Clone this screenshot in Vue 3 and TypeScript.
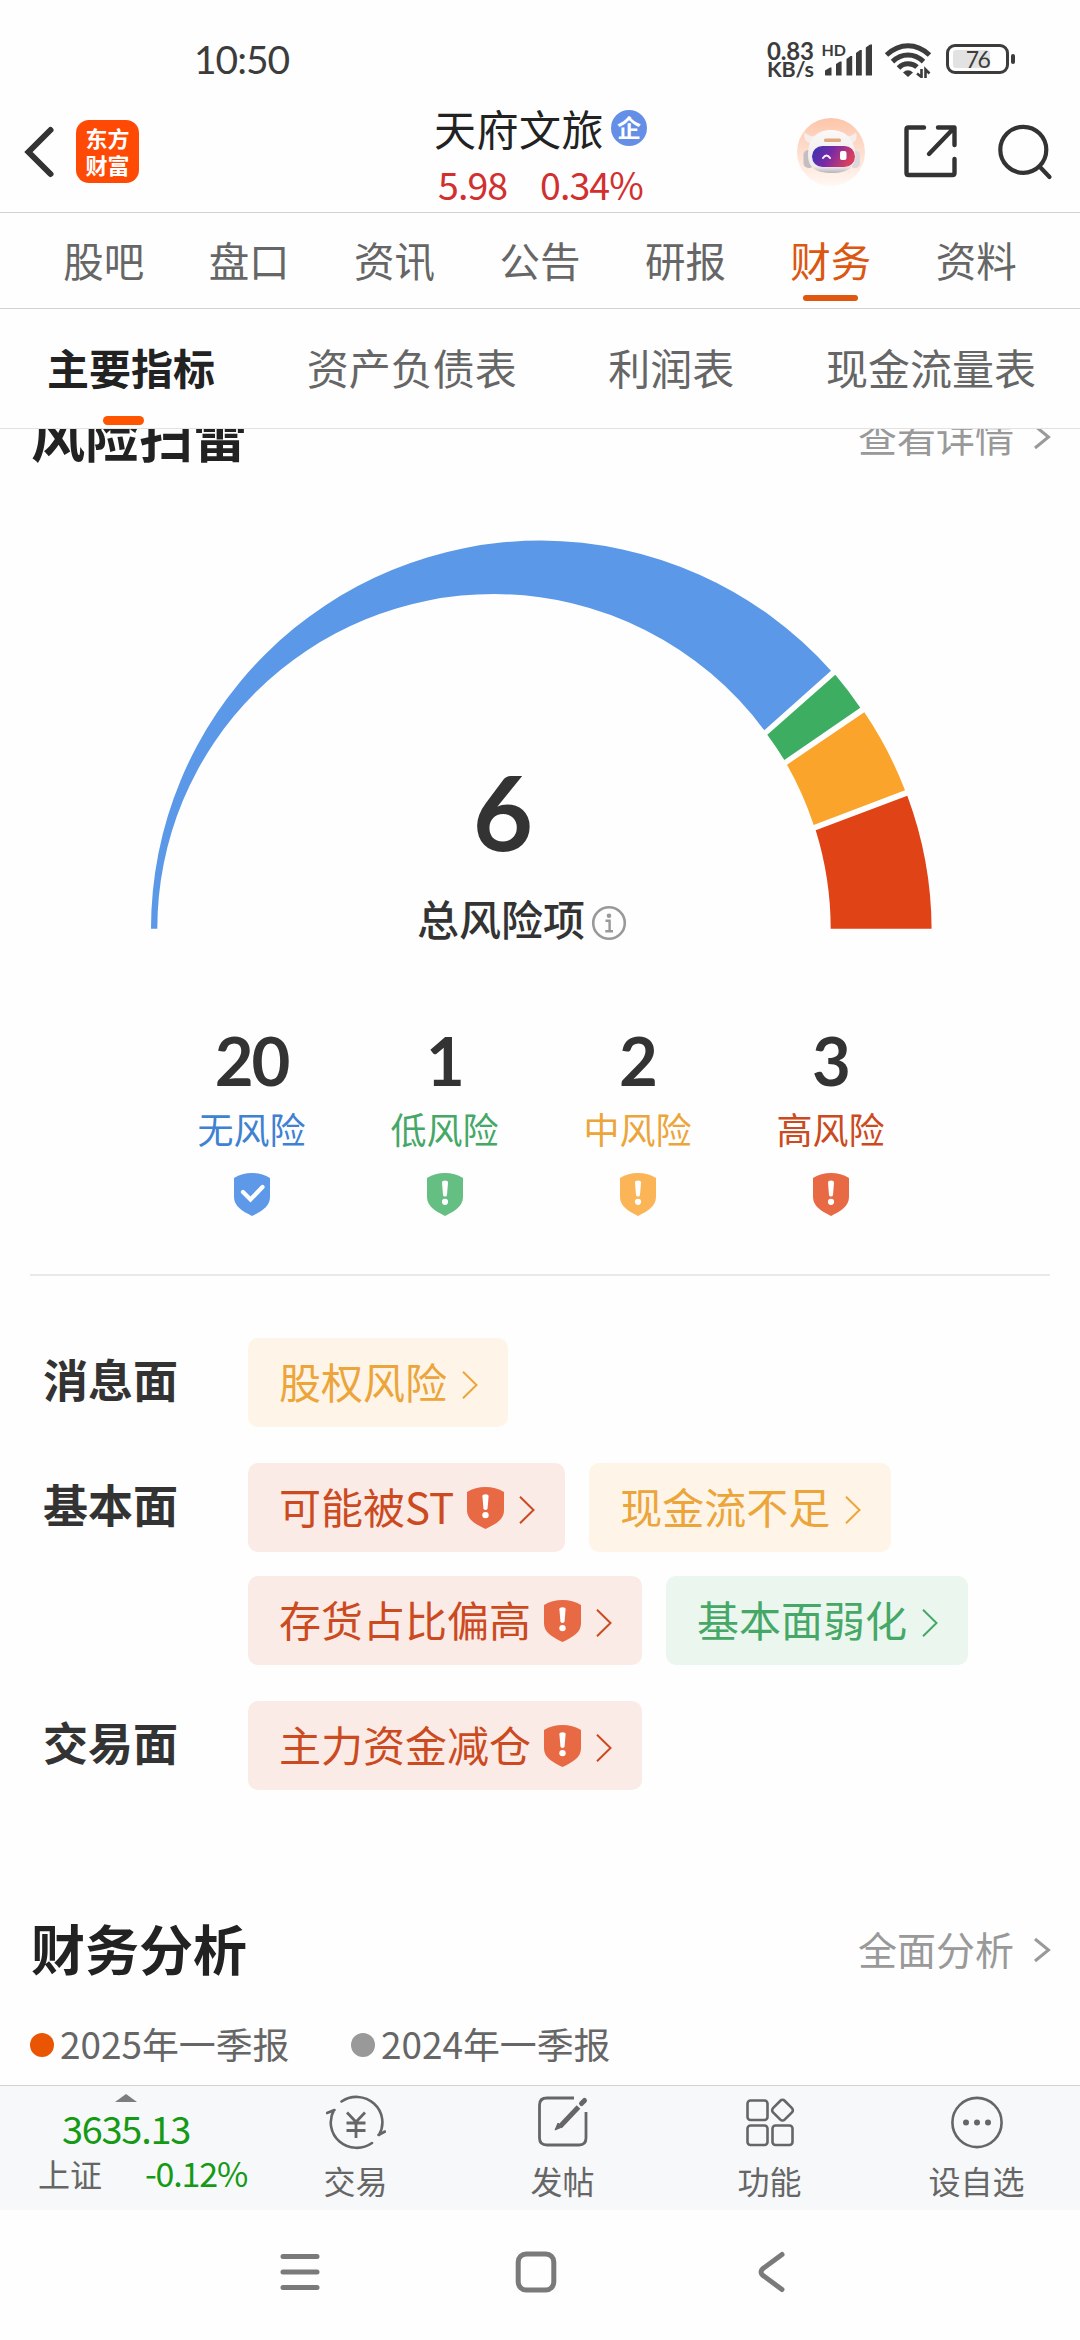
<script setup lang="ts">
type Tone = 'blue' | 'green' | 'orange' | 'red'

interface Tag {
  text: string
  tone: Tone
  shield?: boolean
}

interface Group {
  name: string
  rows: Tag[][]
}

const tabs: string[] = ['股吧', '盘口', '资讯', '公告', '研报', '财务', '资料']
const activeTab = '财务'

const subTabs: string[] = ['主要指标', '资产负债表', '利润表', '现金流量表']
const activeSub = '主要指标'

const levels: { count: number; label: string; tone: Tone }[] = [
  { count: 20, label: '无风险', tone: 'blue' },
  { count: 1, label: '低风险', tone: 'green' },
  { count: 2, label: '中风险', tone: 'orange' },
  { count: 3, label: '高风险', tone: 'red' },
]

const groups: Group[] = [
  { name: '消息面', rows: [[{ text: '股权风险', tone: 'orange' }]] },
  {
    name: '基本面',
    rows: [
      [
        { text: '可能被ST', tone: 'red', shield: true },
        { text: '现金流不足', tone: 'orange' },
      ],
      [
        { text: '存货占比偏高', tone: 'red', shield: true },
        { text: '基本面弱化', tone: 'green' },
      ],
    ],
  },
  { name: '交易面', rows: [[{ text: '主力资金减仓', tone: 'red', shield: true }]] },
]

const legends = [
  { label: '2025年一季报', kind: 'current' },
  { label: '2024年一季报', kind: 'previous' },
]
</script>

<template>
  <div class="screen">
    <div class="status">
      <span class="clock">10:50</span>
      <div class="status-right">
        <div class="speed"><span>0.83</span><span>KB/s</span></div>
        <svg class="signal" width="52" height="36" viewBox="0 0 52 36">
          <text x="-0.500" y="13.500" class="hd">HD</text>
          <g fill="#3c3c3c">
            <path d="M3 33V28.500L8 25.500H9.500V33.500H3.500Z" />
            <path d="M14 33.500V22L18 19.500H19.600V33.500Z" />
            <path d="M24.500 33.500V17L28.500 14H30.200V33.500Z" />
            <path d="M34 33.500V11L38 8H39.800V33.500Z" />
            <path d="M43.800 33.500V5.500L48 2.500H50V33.500Z" />
          </g>
        </svg>
        <svg class="wifi" width="48" height="36" viewBox="0 0 48 36">
          <g fill="none" stroke="#3c3c3c" stroke-width="5">
            <path d="M2.500 13Q12.500 3.800 24 3.800T45.500 13" />
            <path d="M8.500 19.600Q15.500 13 24 13T39.500 19.600" />
            <path d="M14.500 26Q18.500 21.800 24 21.800T33 25" />
          </g>
          <path d="M19 30.500Q24 26 29 30.500L24 35Z" fill="#3c3c3c" />
          <path d="M37.500 27V35L33 31.500M41.500 36V27.500L45.500 31.500" fill="none" stroke="#3c3c3c" stroke-width="2.600" />
        </svg>
        <div class="battery"><span class="cell"><span class="level"></span><span class="pct">76</span></span><span class="nub"></span></div>
      </div>
    </div>

    <header class="header">
      <svg class="back" width="34" height="56" viewBox="0 0 34 56">
        <path d="M28.500 6L6.500 28L28.500 50" fill="none" stroke="#333" stroke-width="6" stroke-linecap="round" stroke-linejoin="miter" />
      </svg>
      <div class="logo"><span>东方</span><span>财富</span></div>
      <div class="stock">
        <div class="name"><span>天府文旅</span><span class="badge">企</span></div>
        <div class="quote"><span>5.98</span><span>0.34%</span></div>
      </div>
      <svg class="robot" width="70" height="70" viewBox="0 0 70 70">
        <defs>
          <linearGradient id="halo" x1="0" y1="0" x2="0" y2="1">
            <stop offset="0" stop-color="#fdc5a9" />
            <stop offset="1" stop-color="#fff8f4" />
          </linearGradient>
          <linearGradient id="visor" x1="0" y1="0" x2="1" y2="0.300">
            <stop offset="0" stop-color="#3336b4" />
            <stop offset="0.500" stop-color="#7a2aa6" />
            <stop offset="1" stop-color="#d83e5e" />
          </linearGradient>
          <linearGradient id="shell" x1="0" y1="0" x2="0" y2="1">
            <stop offset="0" stop-color="#fbf8f7" />
            <stop offset="0.850" stop-color="#eeeaec" />
            <stop offset="1" stop-color="#b9b3ba" />
          </linearGradient>
        </defs>
        <circle cx="35" cy="35" r="34" fill="url(#halo)" />
        <path d="M16 27Q6 24 8.500 15Q12 20 21 19ZM54 27Q63 24 60 15Q57 20 48 19Z" fill="#f6eeec" />
        <rect x="7.500" y="33" width="11" height="18" rx="5" fill="#c4bdc2" />
        <rect x="54" y="34" width="10" height="17" rx="4.500" fill="#ddd6da" />
        <path d="M35 13C50 13 58 22 59.500 38C59.500 49 53 56 36 56C19 56 12 50 12 38C12 23 20 13 35 13Z" fill="url(#shell)" />
        <rect x="28" y="21.500" width="17" height="3.500" rx="1.500" fill="#e0a97e" />
        <rect x="16" y="29" width="43" height="21" rx="10.500" fill="url(#visor)" />
        <path d="M27 41Q30.500 36 34 41" fill="none" stroke="#fff" stroke-width="2" stroke-linecap="round" />
        <rect x="44" y="34" width="6.500" height="9" rx="2" fill="#fff" />
      </svg>
      <svg class="share" width="56" height="56" viewBox="0 0 56 56" fill="none" stroke="#333" stroke-width="4.400" stroke-linecap="round" stroke-linejoin="round">
        <path d="M22 4.500H6.500Q4.500 4.500 4.500 6.500V50Q4.500 52 6.500 52H50.500Q52.500 52 52.500 50V36" />
        <path d="M36 4.500H52.500V22M51 6L27 31" />
      </svg>
      <svg class="search" width="58" height="58" viewBox="0 0 58 58" fill="none" stroke="#333" stroke-width="4.200" stroke-linecap="round">
        <circle cx="27.300" cy="26.800" r="23" />
        <path d="M43.500 43.500L53.500 54" />
      </svg>
    </header>

    <nav class="tabs">
      <div v-for="t in tabs" :key="t" class="tab" :class="{ on: t === activeTab }">
        <span>{{ t }}</span>
      </div>
    </nav>

    <nav class="subtabs">
      <div v-for="t in subTabs" :key="t" class="subtab" :class="{ on: t === activeSub }">{{ t }}</div>
    </nav>

    <main class="content">
      <div class="section-head first">
        <h2>风险扫雷</h2>
        <div class="more">
          <span>查看详情</span>
          <svg width="18" height="26" viewBox="0 0 18 26"><path d="M2 2L15.500 13L2 24" /></svg>
        </div>
      </div>

      <div class="gauge">
        <svg width="1080" height="420" viewBox="0 520 1080 420">
          <path fill="#5c98e8" d="M151 928.700A390.300 388.200 0 0 1 541.300 540.500A390.300 388.200 0 0 1 831 670.700L764.300 730.300A336.700 334.700 0 0 0 494 594A336.700 334.700 0 0 0 157.300 928.700Z" />
          <path fill="#3dae61" d="M835.300 674.700A390.300 388.200 0 0 1 860.300 707.700L784.300 760A336.700 334.700 0 0 0 767.300 734.700Z" />
          <path fill="#faa42b" d="M864.300 712.300A390.300 388.200 0 0 1 905 790.300L813.700 825A336.700 334.700 0 0 0 787 764.700Z" />
          <path fill="#e04316" d="M907.300 795.700A390.300 388.200 0 0 1 931.600 928.700H830.700A336.700 334.700 0 0 0 815.700 830.300Z" />
        </svg>
        <div class="total">
          <div class="total-num">6</div>
          <div class="total-label">
            <span>总风险项</span>
            <svg width="36" height="36" viewBox="0 0 36 36">
              <circle cx="18" cy="18" r="15.800" fill="none" stroke="#999" stroke-width="2.600" />
              <circle cx="18" cy="10.800" r="2.300" fill="#999" />
              <path d="M14.500 15.800H18.600V26M14.300 26.200H22" fill="none" stroke="#999" stroke-width="2.400" />
            </svg>
          </div>
        </div>
      </div>

      <div class="levels">
        <div v-for="l in levels" :key="l.label" class="level-col" :class="l.tone">
          <div class="count">{{ l.count }}</div>
          <div class="level-label">{{ l.label }}</div>
          <svg class="shield" width="36" height="43" viewBox="0 0 36 43">
            <path class="plate" d="M0 5Q8 0 18 0T36 5V24C36 33 28 38 18 43C8 38 0 33 0 24Z" />
            <path v-if="l.tone === 'blue'" d="M9 19L16.500 26.500L28.500 14" fill="none" stroke="#fff" stroke-width="4.200" stroke-linecap="round" />
            <template v-else>
              <path d="M15 9.500Q15 7.500 18 7.500T21 9.500L20 22Q19.800 23.500 18 23.500T16 22Z" fill="#fff" />
              <circle cx="18" cy="28.800" r="3.100" fill="#fff" />
            </template>
          </svg>
        </div>
      </div>

      <div class="rule"></div>

      <section v-for="g in groups" :key="g.name" class="group">
        <div class="group-name">{{ g.name }}</div>
        <div class="group-rows">
          <div v-for="(row, i) in g.rows" :key="i" class="chip-row">
            <div v-for="c in row" :key="c.text" class="chip" :class="c.tone">
              <span>{{ c.text }}</span>
              <svg v-if="c.shield" class="shield" width="37" height="42" viewBox="0 0 36 43" preserveAspectRatio="none">
                <path class="plate" d="M0 5Q8 0 18 0T36 5V24C36 33 28 38 18 43C8 38 0 33 0 24Z" />
                <path d="M15 9.500Q15 7.500 18 7.500T21 9.500L20 22Q19.800 23.500 18 23.500T16 22Z" fill="#fff" />
                <circle cx="18" cy="28.800" r="3.100" fill="#fff" />
              </svg>
              <svg class="go" width="16" height="28" viewBox="0 0 16 28"><path d="M1 0.800L14.500 14L1 27.200" /></svg>
            </div>
          </div>
        </div>
      </section>

      <div class="section-head second">
        <h2>财务分析</h2>
        <div class="more">
          <span>全面分析</span>
          <svg width="18" height="26" viewBox="0 0 18 26"><path d="M2 2L15.500 13L2 24" /></svg>
        </div>
      </div>
      <div class="legend">
        <div v-for="l in legends" :key="l.label" class="legend-item">
          <i :class="l.kind"></i><span>{{ l.label }}</span>
        </div>
      </div>
    </main>

    <footer class="bottom">
      <div class="index">
        <svg width="22" height="8" viewBox="0 0 22 8"><path d="M0 8L11 0L22 8Z" fill="#7d7d7d" /></svg>
        <div class="index-value">3635.13</div>
        <div class="index-row"><span>上证</span><span class="chg">-0.12%</span></div>
      </div>
      <div class="action">
        <svg width="60" height="56" viewBox="0 0 60 56" fill="none" stroke="#666" stroke-width="2.600" stroke-linecap="round">
          <path d="M15.500 7.500A26 25.500 0 0 1 53 41M52.500 41L59 37.500" />
          <path d="M8 16A26 25.500 0 0 0 46 49M1 19L8.500 16" />
          <path d="M21 18.500L30 28L39 18.500M30 28V44M20.500 29H39.500M20.500 36.500H39.500" stroke-width="2.800" stroke-linecap="butt" />
        </svg>
        <span>交易</span>
      </div>
      <div class="action">
        <svg width="60" height="56" viewBox="0 0 60 56" fill="none" stroke="#666" stroke-width="2.800">
          <path d="M41 4H14Q6.500 4 6.500 11V44Q6.500 51 14 51H46Q53 51 53 44V18" />
          <path d="M45.500 13L27 32.500" stroke-width="5" />
          <path d="M48.500 9.500L51.500 6.500" stroke-width="5" stroke-linecap="round" />
          <path d="M22 36L25 29L29 33Z" fill="#666" stroke-width="1" />
        </svg>
        <span>发帖</span>
      </div>
      <div class="action">
        <svg width="60" height="56" viewBox="0 0 60 56" fill="none" stroke="#666" stroke-width="2.600">
          <rect x="7.500" y="6.500" width="20" height="19.500" rx="3" />
          <rect x="7.500" y="31.500" width="20" height="19.500" rx="3" />
          <rect x="32.500" y="31.500" width="20" height="19.500" rx="3" />
          <rect x="34.300" y="8" width="16.400" height="16.400" rx="3" transform="rotate(45 42.500 16.200)" />
        </svg>
        <span>功能</span>
      </div>
      <div class="action">
        <svg width="60" height="56" viewBox="0 0 60 56">
          <circle cx="30" cy="28.500" r="24.600" fill="none" stroke="#666" stroke-width="2.600" />
          <g fill="#666"><circle cx="19" cy="28.500" r="3" /><circle cx="30" cy="28.500" r="3" /><circle cx="41" cy="28.500" r="3" /></g>
        </svg>
        <span>设自选</span>
      </div>
    </footer>

    <div class="sysnav">
      <svg width="44" height="44" viewBox="0 0 44 44"><path d="M5 6.500H39M5 22H39M5 37.500H39" /></svg>
      <svg width="44" height="44" viewBox="0 0 44 44"><rect x="4.200" y="4" width="35.600" height="36" rx="8" /></svg>
      <svg width="44" height="44" viewBox="0 0 44 44"><path d="M32 4.500L13 18.500Q9 22 13 25.500L32 39.500" /></svg>
    </div>
  </div>
</template>

<style>
body {
  margin: 0;
  background: #fff;
}
</style>

<style scoped>
.screen {
  width: 1080px;
  height: 2340px;
  overflow: hidden;
  display: flex;
  flex-direction: column;
  background: #fefefe;
  font-family: 'Noto Sans CJK SC', sans-serif;
  color: #333;
}
.screen svg {
  display: block;
  flex: none;
}
.screen span,
.screen div {
  white-space: nowrap;
}

/* status bar */
.status {
  height: 110px;
  flex: none;
  display: flex;
  align-items: flex-start;
  justify-content: space-between;
  box-sizing: border-box;
  padding: 42px 65px 0 194px;
}
.clock {
  font-family: Lato, sans-serif;
  font-size: 39px;
  line-height: 34px;
  letter-spacing: -1px;
  color: #3c3c3c;
}
.status-right {
  display: flex;
  align-items: flex-start;
}
.speed {
  width: 55px;
  display: flex;
  flex-direction: column;
  font-family: Lato, sans-serif;
  font-weight: 700;
  font-size: 24px;
  line-height: 18px;
  color: #3c3c3c;
  letter-spacing: -0.2px;
}
.speed span:last-child {
  font-size: 21.500px;
}
.hd {
  font: 700 16px Lato, sans-serif;
  fill: #3c3c3c;
}
.screen .signal {
  margin-right: 10px;
  overflow: visible;
}
.wifi {
  margin-right: 14px;
}
.battery {
  display: flex;
  align-items: center;
  margin-top: 2px;
}
.cell {
  position: relative;
  width: 63px;
  height: 30px;
  box-sizing: border-box;
  border: 3px solid #3c3c3c;
  border-radius: 9px;
}
.level {
  position: absolute;
  left: 4px;
  top: 3px;
  width: 37px;
  height: 18px;
  border-radius: 3px;
  background: #e2e2e2;
}
.pct {
  position: absolute;
  left: 0;
  right: 0;
  top: 0;
  text-align: center;
  font-family: Lato, sans-serif;
  font-size: 23px;
  line-height: 25px;
  letter-spacing: -1.500px;
  color: #3c3c3c;
}
.nub {
  width: 4px;
  height: 10px;
  margin-left: 2px;
  border-radius: 2px;
  background: #3c3c3c;
}

/* header */
.header {
  height: 103px;
  flex: none;
  box-sizing: border-box;
  border-bottom: 1px solid #d2d2d2;
  display: flex;
  align-items: flex-start;
}
.back {
  margin: 14px 0 0 22px;
}
.logo {
  margin: 10px 0 0 20px;
  width: 63px;
  height: 63px;
  box-sizing: border-box;
  padding-top: 4px;
  border-radius: 13px;
  background: #ff4a05;
  color: #fff;
  font-weight: 700;
  font-size: 22px;
  line-height: 27px;
  display: flex;
  flex-direction: column;
  align-items: center;
}
.stock {
  margin-left: 295px;
  width: 215px;
}
.name {
  display: flex;
  align-items: center;
  height: 36px;
  font-size: 42px;
  letter-spacing: 0.500px;
  line-height: 36px;
  color: #222;
}
.badge {
  width: 36px;
  height: 36px;
  margin-left: 7px;
  border-radius: 50%;
  background: #658fe6;
  color: #fff;
  font-size: 24px;
  font-weight: 700;
  letter-spacing: 0;
  line-height: 34px;
  text-align: center;
}
.quote {
  display: flex;
  margin: 20px 0 0 4px;
  height: 36px;
  line-height: 36px;
  font-size: 37.500px;
  letter-spacing: -0.900px;
  color: #d2302f;
}
.quote span:first-child {
  width: 102px;
}
.robot {
  margin: 7px 0 0 147px;
}
.share {
  margin: 13px 0 0 36px;
}
.search {
  margin: 13px 0 0 38px;
}

/* tabs */
.tabs {
  height: 96px;
  flex: none;
  box-sizing: border-box;
  border-bottom: 1px solid #d2d2d2;
  padding: 0 31px;
  display: flex;
}
.tab {
  flex: 1;
  position: relative;
  text-align: center;
  font-size: 40.500px;
  line-height: 93px;
  color: #666;
}
.tab.on {
  color: #db5712;
}
.tab.on::after {
  content: '';
  position: absolute;
  left: 50%;
  bottom: 7px;
  width: 55px;
  height: 6px;
  margin-left: -27.500px;
  border-radius: 3px;
  background: #df5710;
}
.subtabs {
  height: 120px;
  flex: none;
  box-sizing: border-box;
  border-bottom: 1px solid #e2e2e2;
  padding: 0 44px 0 47px;
  display: flex;
  justify-content: space-between;
}
.subtab {
  position: relative;
  font-size: 42px;
  line-height: 116px;
  color: #666;
}
.subtab.on {
  color: #222;
  font-weight: 700;
}
.subtab.on::after {
  content: '';
  position: absolute;
  left: 56px;
  bottom: 3px;
  width: 41px;
  height: 9px;
  border-radius: 5px;
  background: #ff5500;
}

/* content */
.content {
  height: 1656px;
  flex: none;
  overflow: hidden;
}
.section-head {
  height: 80px;
  display: flex;
  align-items: center;
  justify-content: space-between;
  padding: 0 29px 0 31px;
}
.section-head.first {
  margin-top: -34px;
}
h2 {
  margin: 0;
  font-size: 54px;
  line-height: 80px;
  font-weight: 700;
  color: #222;
}
.more {
  display: flex;
  align-items: center;
  font-size: 39px;
  line-height: 76px;
  color: #999;
}
.more svg {
  margin-left: 19px;
  margin-top: 4px;
}
.more path {
  fill: none;
  stroke: #999;
  stroke-width: 3;
}
.gauge {
  position: relative;
  margin-top: 45px;
  height: 500px;
}
.total {
  position: absolute;
  left: 417px;
  top: 233px;
}
.total-num {
  width: 172px;
  text-align: center;
  font-family: Lato, sans-serif;
  font-weight: 700;
  font-size: 104px;
  line-height: 116px;
}
.total-label {
  display: flex;
  align-items: center;
  margin-top: 21px;
  font-size: 42px;
  line-height: 56px;
  font-weight: 500;
}
.total-label svg {
  margin: 10px 0 0 6px;
}
.levels {
  display: flex;
  padding-left: 155px;
}
.level-col {
  width: 193px;
  display: flex;
  flex-direction: column;
  align-items: center;
}
.count {
  font-family: Lato, sans-serif;
  font-weight: 700;
  font-size: 67px;
  line-height: 80px;
  letter-spacing: -2px;
}
.level-label {
  margin-top: 8px;
  font-size: 36px;
  line-height: 41px;
}
.level-col .shield {
  margin-top: 24px;
}
.level-col.blue .level-label {
  color: #3f81d2;
}
.level-col.green .level-label,
.chip.green {
  color: #45a866;
}
.level-col.orange .level-label,
.chip.orange {
  color: #eca53a;
}
.level-col.red .level-label,
.chip.red {
  color: #cb4a20;
}
.blue .plate {
  fill: #5d99e8;
}
.green .plate {
  fill: #65be82;
}
.orange .plate {
  fill: #fbb556;
}
.red .plate {
  fill: #e86a45;
}
.rule {
  height: 2px;
  margin: 58px 30px 0;
  background: #e9e9e9;
}
.group {
  display: flex;
  padding-left: 43px;
  margin-top: 36px;
}
.rule + .group {
  margin-top: 62px;
}
.group-name {
  width: 205px;
  font-size: 45px;
  line-height: 81px;
  font-weight: 700;
}
.group-rows {
  display: flex;
  flex-direction: column;
  gap: 24px;
}
.chip-row {
  display: flex;
  gap: 24px;
}
.chip {
  height: 89px;
  box-sizing: border-box;
  padding: 0 30px 0 31px;
  border-radius: 10px;
  display: flex;
  align-items: center;
  font-size: 42px;
  line-height: 84px;
}
.chip span {
  margin-top: -3px;
}
.chip.orange {
  background: #fef5e8;
}
.chip.red {
  background: #fbebe7;
}
.chip.green {
  background: #ebf6ef;
}
.chip .shield {
  margin-left: 13px;
}
.chip .go {
  margin-left: 15px;
  margin-top: 5px;
}
.go path {
  fill: none;
  stroke: currentColor;
  stroke-width: 2;
}
.section-head.second {
  margin-top: 118px;
}
.legend {
  display: flex;
  padding-left: 30px;
  margin-top: 30px;
}
.legend-item {
  width: 321px;
  display: flex;
  align-items: center;
  font-size: 36.900px;
  line-height: 50px;
  color: #666;
}
.legend-item i {
  width: 24px;
  height: 24px;
  margin: 4px 6px 0 0;
  border-radius: 50%;
}
.legend-item .current {
  background: #ea5504;
}
.legend-item .previous {
  background: #999;
}

/* bottom toolbar */
.bottom {
  height: 125px;
  flex: none;
  box-sizing: border-box;
  border-top: 1px solid #d2d2d2;
  background: #f7f8fa;
  display: flex;
  color: #666;
}
.index {
  width: 252px;
  padding-top: 8px;
  display: flex;
  flex-direction: column;
  align-items: center;
}
.index-value {
  margin-top: 4px;
  font-size: 38px;
  line-height: 44px;
  letter-spacing: -1.300px;
  color: #169a16;
}
.index-row {
  align-self: stretch;
  display: flex;
  justify-content: space-between;
  margin-top: 1px;
  padding: 0 5px 0 38px;
  font-size: 32px;
  line-height: 44px;
}
.index-row .chg {
  font-size: 34px;
  letter-spacing: -1.200px;
  color: #169a16;
}
.action {
  width: 207px;
  display: flex;
  flex-direction: column;
  align-items: center;
  font-size: 32px;
  line-height: 40px;
  padding-top: 8px;
}
.action span {
  margin-top: 10px;
}

/* system navigation */
.sysnav {
  height: 130px;
  flex: none;
  display: flex;
  align-items: center;
  gap: 192px;
  box-sizing: border-box;
  padding: 0 0 6px 278px;
}
.sysnav svg {
  fill: none;
  stroke: #7a7a7a;
  stroke-width: 5;
  stroke-linecap: round;
  stroke-linejoin: round;
}
</style>
